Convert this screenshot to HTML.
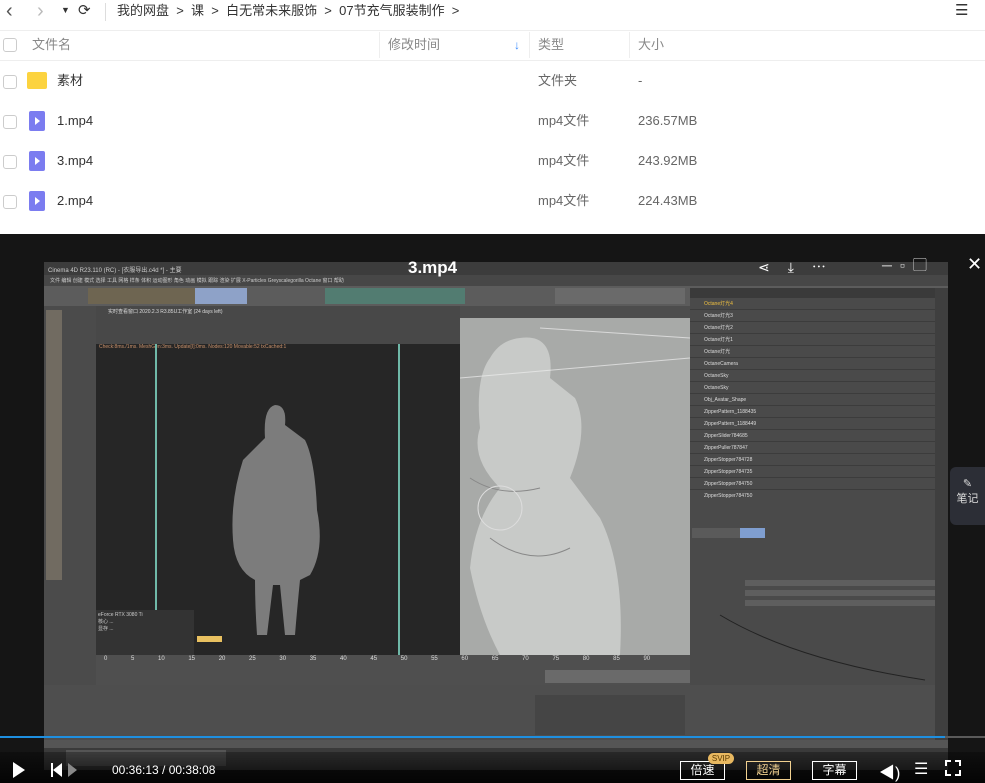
<!DOCTYPE html>
<html><head><meta charset="utf-8"><style>
*{margin:0;padding:0;box-sizing:border-box}
body{width:985px;height:783px;overflow:hidden;background:#fff;font-family:"Liberation Sans","Noto Sans CJK SC",sans-serif;position:relative}
.a{position:absolute}
.t{color:#333;font-size:13px;line-height:16px;white-space:nowrap}
.g{color:#888;font-size:13px;line-height:16px;white-space:nowrap}
.cb{width:14px;height:14px;border:1px solid #ccc;border-radius:3px;background:#fff}
.row{height:12px;background:#4a4a4a;border-bottom:1px solid #3c3c3c;font-size:5px;color:#ddd;padding-left:14px;line-height:12px;white-space:nowrap}
</style></head><body>
<!-- top bar -->
<div class="a" style="left:6px;top:0;font-size:20px;color:#555;line-height:22px">‹</div>
<div class="a" style="left:37px;top:0;font-size:20px;color:#bbb;line-height:22px">›</div>
<div class="a" style="left:61px;top:5px;font-size:9px;color:#333;line-height:10px">▼</div>
<div class="a" style="left:78px;top:2px;font-size:15px;color:#333;line-height:18px">⟳</div>
<div class="a" style="left:105px;top:3px;width:1px;height:18px;background:#ddd"></div>
<div class="a t" style="left:117px;top:3px">我的网盘 &nbsp;&gt;&nbsp; 课 &nbsp;&gt;&nbsp; 白无常未来服饰 &nbsp;&gt;&nbsp; 07节充气服装制作 &nbsp;&gt;</div>
<div class="a" style="left:955px;top:2px;font-size:15px;color:#333;line-height:18px">☰</div>
<div class="a" style="left:0;top:30px;width:985px;height:1px;background:#eee"></div>
<div class="a" style="left:0;top:60px;width:985px;height:1px;background:#eee"></div>
<div class="a cb" style="left:3px;top:38px"></div>
<div class="a g" style="left:32px;top:37px">文件名</div>
<div class="a" style="left:379px;top:32px;width:1px;height:26px;background:#eee"></div>
<div class="a g" style="left:388px;top:37px">修改时间</div>
<div class="a" style="left:514px;top:37px;color:#3b8cff;font-size:12px;line-height:16px">↓</div>
<div class="a" style="left:529px;top:32px;width:1px;height:26px;background:#eee"></div>
<div class="a g" style="left:538px;top:37px">类型</div>
<div class="a" style="left:629px;top:32px;width:1px;height:26px;background:#eee"></div>
<div class="a g" style="left:638px;top:37px">大小</div>
<!-- rows -->
<div class="a cb" style="left:3px;top:75px"></div>
<div class="a" style="left:27px;top:72px;width:20px;height:17px;background:#fcd33f;border-radius:2px"></div>
<div class="a t" style="left:57px;top:73px">素材</div>
<div class="a g" style="left:538px;top:73px;color:#666">文件夹</div>
<div class="a g" style="left:638px;top:73px;color:#666">-</div>

<div class="a cb" style="left:3px;top:115px"></div>
<div class="a" style="left:29px;top:111px;width:16px;height:20px;background:#7b7cf0;border-radius:2px"><div style="margin:6px 0 0 6px;width:0;height:0;border-left:5px solid #fff;border-top:4px solid transparent;border-bottom:4px solid transparent"></div></div>
<div class="a t" style="left:57px;top:113px">1.mp4</div>
<div class="a g" style="left:538px;top:113px;color:#666">mp4文件</div>
<div class="a g" style="left:638px;top:113px;color:#666">236.57MB</div>

<div class="a cb" style="left:3px;top:155px"></div>
<div class="a" style="left:29px;top:151px;width:16px;height:20px;background:#7b7cf0;border-radius:2px"><div style="margin:6px 0 0 6px;width:0;height:0;border-left:5px solid #fff;border-top:4px solid transparent;border-bottom:4px solid transparent"></div></div>
<div class="a t" style="left:57px;top:153px">3.mp4</div>
<div class="a g" style="left:538px;top:153px;color:#666">mp4文件</div>
<div class="a g" style="left:638px;top:153px;color:#666">243.92MB</div>

<div class="a cb" style="left:3px;top:195px"></div>
<div class="a" style="left:29px;top:191px;width:16px;height:20px;background:#7b7cf0;border-radius:2px"><div style="margin:6px 0 0 6px;width:0;height:0;border-left:5px solid #fff;border-top:4px solid transparent;border-bottom:4px solid transparent"></div></div>
<div class="a t" style="left:57px;top:193px">2.mp4</div>
<div class="a g" style="left:538px;top:193px;color:#666">mp4文件</div>
<div class="a g" style="left:638px;top:193px;color:#666">224.43MB</div>

<!-- video -->
<div class="a" style="left:0;top:234px;width:985px;height:549px;background:#151515"></div>
<div class="a" style="left:44px;top:262px;width:904px;height:488px;background:#555"></div>
<div class="a" style="left:44px;top:262px;width:904px;height:13px;background:#3c3c3c;font-size:6px;color:#ccc;padding:3px 4px">Cinema 4D R23.110 (RC) - [衣服导出.c4d *] - 主要</div>
<div class="a" style="left:44px;top:275px;width:904px;height:11px;background:#474747;font-size:5px;color:#ccc;padding:2px 6px;white-space:nowrap">文件 编辑 创建 模式 选择 工具 网格 样条 体积 运动图形 角色 动画 模拟 跟踪 渲染 扩展 X-Particles Greyscalegorilla Octane 窗口 帮助</div>
<div class="a" style="left:44px;top:286px;width:904px;height:20px;background:#5c5c5c"></div>
<div class="a" style="left:88px;top:288px;width:110px;height:16px;background:#7a6a4a;opacity:.6"></div>
<div class="a" style="left:195px;top:288px;width:52px;height:16px;background:#8ea2c8"></div>
<div class="a" style="left:325px;top:288px;width:140px;height:16px;background:#4f8a7a;opacity:.7"></div>
<div class="a" style="left:555px;top:288px;width:130px;height:16px;background:#6a6a6a"></div>
<div class="a" style="left:44px;top:306px;width:52px;height:434px;background:#4b4b4b"></div>
<div class="a" style="left:46px;top:310px;width:16px;height:270px;background:#8a8070;opacity:.6"></div>
<div class="a" style="left:96px;top:306px;width:364px;height:38px;background:#484848"></div>
<div class="a" style="left:96px;top:308px;font-size:5px;color:#ddd;padding-left:12px">实时查看窗口 2020.2.3 R3.85U工作室 (24 days left)</div>
<div class="a" style="left:96px;top:344px;width:364px;height:311px;background:#262626"></div>
<div class="a" style="left:99px;top:344px;font-size:5px;color:#c8906a">Check:8ms./1ms. MeshGen:3ms. Update[I]:0ms. Nodes:120 Movable:52 txCached:1</div>
<div class="a" style="left:155px;top:344px;width:2px;height:311px;background:#6fb8a8"></div>
<div class="a" style="left:398px;top:344px;width:2px;height:311px;background:#6fb8a8"></div>
<svg class="a" style="left:225px;top:400px" width="105" height="240"><path d="M50 5 Q62 5 60 25 L80 40 Q90 60 92 110 Q100 150 85 175 L75 180 Q72 210 70 235 L60 235 L55 185 L48 185 L42 235 L32 235 Q30 205 30 180 Q10 170 8 140 Q5 100 18 60 L40 38 Q38 8 50 5Z" fill="#9a9a9a" opacity=".75"/></svg>
<div class="a" style="left:96px;top:610px;width:98px;height:45px;background:#333;font-size:5px;color:#ccc;padding:2px">eForce RTX 3080 Ti<br>核心 ...<br>显存 ...</div>
<div class="a" style="left:197px;top:636px;width:25px;height:6px;background:#e8c060"></div>
<div class="a" style="left:460px;top:306px;width:230px;height:12px;background:#4d4d4d"></div>
<div class="a" style="left:460px;top:318px;width:230px;height:337px;background:#a8aaa8"></div>
<svg class="a" style="left:460px;top:318px" width="230" height="337"><path d="M60 20 Q95 15 90 60 L115 80 Q130 110 110 160 L140 200 Q165 250 160 337 L40 337 Q20 300 10 250 Q15 200 40 170 Q10 140 20 110 Q15 60 30 40 Q40 22 60 20Z" fill="#c8cac8"/><path d="M10 160 Q40 180 80 170" stroke="#888" fill="none"/><path d="M30 220 Q70 250 110 230" stroke="#888" fill="none"/><circle cx="40" cy="190" r="22" fill="none" stroke="#ddd"/><path d="M0 60 L230 40 M80 10 L230 20" stroke="#eee" opacity=".7"/></svg>
<div class="a" style="left:690px;top:288px;width:245px;height:212px;background:#444;overflow:hidden">
<div style="height:10px;background:#3a3a3a"></div>
<div class="row" style="color:#f0c040">Octane灯光4</div><div class="row">Octane灯光3</div><div class="row">Octane灯光2</div><div class="row">Octane灯光1</div><div class="row">Octane灯光</div><div class="row">OctaneCamera</div><div class="row">OctaneSky</div><div class="row">OctaneSky</div><div class="row">Obj_Avatar_Shape</div><div class="row">ZipperPattern_1188435</div><div class="row">ZipperPattern_1188449</div><div class="row">ZipperSlider784685</div><div class="row">ZipperPuller787847</div><div class="row">ZipperStopper784728</div><div class="row">ZipperStopper784735</div><div class="row">ZipperStopper784750</div><div class="row">ZipperStopper784750</div><div class="row">ZipperSlider1188465</div>
</div>
<div class="a" style="left:690px;top:500px;width:245px;height:188px;background:#4a4a4a"></div>
<div class="a" style="left:692px;top:528px;width:72px;height:10px;background:#5a5a5a"></div>
<div class="a" style="left:740px;top:528px;width:25px;height:10px;background:#7f9ed0"></div>
<div class="a" style="left:745px;top:580px;width:190px;height:6px;background:#5e5e5e"></div>
<div class="a" style="left:745px;top:590px;width:190px;height:6px;background:#5e5e5e"></div>
<div class="a" style="left:745px;top:600px;width:190px;height:6px;background:#5e5e5e"></div>
<svg class="a" style="left:715px;top:610px" width="215" height="75"><path d="M5 5 Q80 50 210 70" stroke="#222" fill="none"/></svg>
<div class="a" style="left:935px;top:288px;width:13px;height:452px;background:#3f3f3f"></div>
<div class="a" style="left:96px;top:655px;width:594px;height:30px;background:#4f4f4f"></div>
<div class="a" style="left:96px;top:656px;width:594px;font-size:6px;color:#ddd;word-spacing:22px;white-space:nowrap;padding-left:8px">0 5 10 15 20 25 30 35 40 45 50 55 60 65 70 75 80 85 90</div>
<div class="a" style="left:545px;top:670px;width:145px;height:13px;background:#6a6a6a"></div>
<div class="a" style="left:44px;top:685px;width:891px;height:55px;background:#4e4e4e"></div>
<div class="a" style="left:535px;top:695px;width:150px;height:40px;background:#454545"></div>
<div class="a" style="left:408px;top:258px;color:#fff;font-size:17px;font-weight:bold">3.mp4</div>
<div class="a" style="left:758px;top:257px;color:#fff;font-size:14px;letter-spacing:18px;white-space:nowrap">⋖⤓⋯</div>
<div class="a" style="left:882px;top:255px;color:#ddd;font-size:14px;letter-spacing:8px">─▫▢</div>
<div class="a" style="left:967px;top:254px;color:#fff;font-size:18px">✕</div>
<div class="a" style="left:950px;top:467px;width:35px;height:58px;background:#2c2e36;border-radius:6px 0 0 6px;color:#ddd;font-size:11px;text-align:center;padding-top:10px">✎<br>笔记</div>
<div class="a" style="left:44px;top:748px;width:904px;height:22px;background:#3a3a3a"></div>
<div class="a" style="left:66px;top:750px;width:160px;height:16px;background:#555"></div>
<div class="a" style="left:0;top:736px;width:985px;height:2px;background:#5a5a5a"></div>
<div class="a" style="left:0;top:736px;width:945px;height:2px;background:#1e8fe0"></div>
<div class="a" style="left:0;top:752px;width:985px;height:31px;background:linear-gradient(rgba(0,0,0,.3),rgba(0,0,0,.8))"></div>
<div class="a" style="left:13px;top:762px;width:0;height:0;border-left:12px solid #fff;border-top:8px solid transparent;border-bottom:8px solid transparent"></div>
<div class="a" style="left:51px;top:763px;width:2px;height:14px;background:#fff"></div>
<div class="a" style="left:53px;top:763px;width:0;height:0;border-right:9px solid #fff;border-top:7px solid transparent;border-bottom:7px solid transparent"></div>
<div class="a" style="left:68px;top:763px;width:0;height:0;border-left:9px solid #888;border-top:7px solid transparent;border-bottom:7px solid transparent"></div>
<div class="a" style="left:112px;top:763px;color:#fff;font-size:12px">00:36:13 / 00:38:08</div>
<div class="a" style="left:680px;top:761px;width:45px;height:19px;border:1px solid #fff;color:#fff;font-size:12px;text-align:center;line-height:17px">倍速</div>
<div class="a" style="left:708px;top:753px;width:26px;height:11px;background:#e8b860;border-radius:6px;font-size:8px;color:#5a3a00;text-align:center;line-height:11px">SVIP</div>
<div class="a" style="left:746px;top:761px;width:45px;height:19px;border:1px solid #f0d090;color:#f0d090;font-size:12px;text-align:center;line-height:17px">超清</div>
<div class="a" style="left:812px;top:761px;width:45px;height:19px;border:1px solid #fff;color:#fff;font-size:12px;text-align:center;line-height:17px">字幕</div>
<div class="a" style="left:879px;top:759px;color:#fff;font-size:16px">◀)</div>
<div class="a" style="left:914px;top:759px;color:#fff;font-size:16px">☰</div>
<div class="a" style="left:945px;top:760px;width:16px;height:16px;border:2px dashed #fff"></div>
</body></html>
